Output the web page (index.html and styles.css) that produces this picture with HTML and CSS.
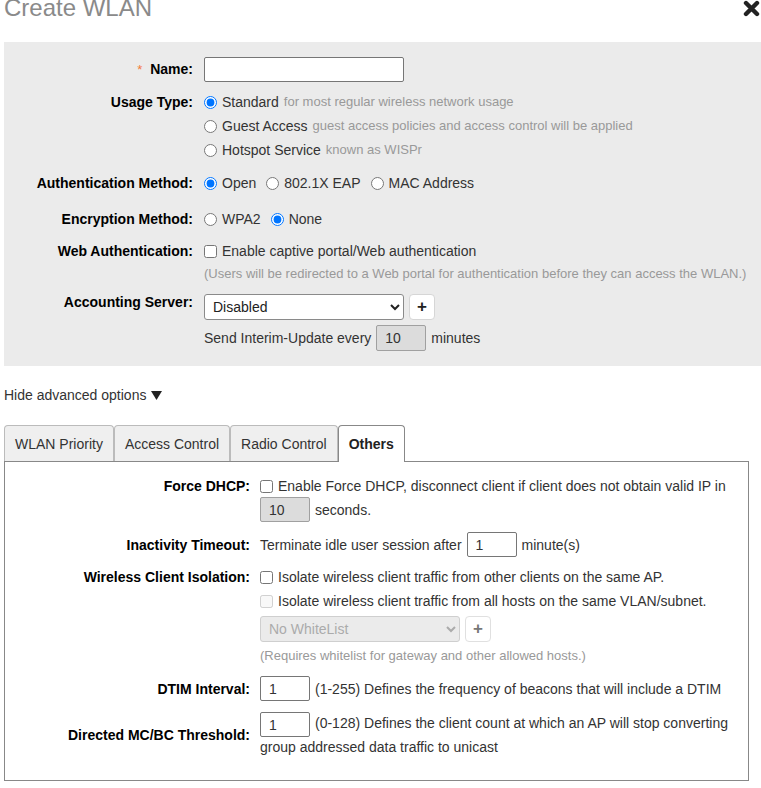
FILE: index.html
```html
<!DOCTYPE html>
<html>
<head>
<meta charset="utf-8">
<title>Create WLAN</title>
<link rel="stylesheet" href="styles.css">
</head>
<body>
<div class="page">
  <div class="head">
    <h1 class="title">Create WLAN</h1>
    <svg class="close" width="17" height="17" viewBox="0 0 17 17" aria-label="Close">
      <path d="M3 3 L14 14 M14 3 L3 14" stroke="#222" stroke-width="4.4" stroke-linecap="round" fill="none"/>
    </svg>
  </div>

  <div class="panel">
    <div class="row">
      <div class="lbl lbl-name"><span class="req">*</span>&nbsp; Name:</div>
      <div class="ctl"><input class="txt w200" type="text"></div>
    </div>

    <div class="row mt8">
      <div class="lbl">Usage Type:</div>
      <div class="ctl">
        <label class="line"><input type="radio" name="usage" checked> Standard <span class="hint">for most regular wireless network usage</span></label>
        <label class="line"><input type="radio" name="usage"> Guest Access <span class="hint">guest access policies and access control will be applied</span></label>
        <label class="line"><input type="radio" name="usage"> Hotspot Service <span class="hint">known as WISPr</span></label>
      </div>
    </div>

    <div class="row mt9">
      <div class="lbl">Authentication Method:</div>
      <div class="ctl line">
        <label class="opt"><input type="radio" name="auth" checked> Open</label>
        <label class="opt"><input type="radio" name="auth"> 802.1X EAP</label>
        <label class="opt"><input type="radio" name="auth"> MAC Address</label>
      </div>
    </div>

    <div class="row mt12">
      <div class="lbl">Encryption Method:</div>
      <div class="ctl line">
        <label class="opt"><input type="radio" name="enc"> WPA2</label>
        <label class="opt"><input type="radio" name="enc" checked> None</label>
      </div>
    </div>

    <div class="row mt8">
      <div class="lbl">Web Authentication:</div>
      <div class="ctl">
        <label class="line"><input type="checkbox"> Enable captive portal/Web authentication</label>
        <div class="note">(Users will be redirected to a Web portal for authentication before they can access the WLAN.)</div>
      </div>
    </div>

    <div class="row mt9">
      <div class="lbl lbl-acct">Accounting Server:</div>
      <div class="ctl">
        <div class="inl">
          <select class="sel"><option>Disabled</option></select>
          <button class="plus" type="button">+</button>
        </div>
        <div class="inl mt5">
          <span>Send Interim-Update every</span>
          <input class="txt w50 dim" type="text" value="10">
          <span>minutes</span>
        </div>
      </div>
    </div>
  </div>

  <div class="adv">Hide advanced options
    <svg class="tri" width="11" height="9" viewBox="0 0 11 9"><path d="M0 0 H11 L5.5 9 Z" fill="#222"/></svg>
  </div>

  <div class="tabs">
    <div class="tab">WLAN Priority</div>
    <div class="tab">Access Control</div>
    <div class="tab">Radio Control</div>
    <div class="tab active">Others</div>
  </div>

  <div class="box">
    <div class="row">
      <div class="lbl2 lh22">Force DHCP:</div>
      <div class="ctl2 wrap">
        <label class="first"><input type="checkbox">Enable Force DHCP, disconnect client if client does not obtain valid IP in</label>
        <input class="txt w50 dim h25" type="text" value="10">
        <span>seconds.</span>
      </div>
    </div>

    <div class="row mt10 center">
      <div class="lbl2">Inactivity Timeout:</div>
      <div class="ctl2 inl">
        <span>Terminate idle user session after</span>
        <input class="txt w50 h25" type="text" value="1">
        <span>minute(s)</span>
      </div>
    </div>

    <div class="row mt8">
      <div class="lbl2">Wireless Client Isolation:</div>
      <div class="ctl2">
        <label class="line"><input type="checkbox"> Isolate wireless client traffic from other clients on the same AP.</label>
        <label class="line"><input type="checkbox" disabled> Isolate wireless client traffic from all hosts on the same VLAN/subnet.</label>
        <div class="inl mt3">
          <select class="sel" disabled><option>No WhiteList</option></select>
          <button class="plus" type="button" disabled>+</button>
        </div>
        <div class="note mt3">(Requires whitelist for gateway and other allowed hosts.)</div>
      </div>
    </div>

    <div class="row mt9 center">
      <div class="lbl2">DTIM Interval:</div>
      <div class="ctl2 inl">
        <input class="txt w50 h25" type="text" value="1">
        <span>(1-255) Defines the frequency of beacons that will include a DTIM</span>
      </div>
    </div>

    <div class="row mt11 center">
      <div class="lbl2">Directed MC/BC Threshold:</div>
      <div class="ctl2 flow2"><input class="txt w50 h25 inline" type="text" value="1">(0-128) Defines the client count at which an AP will stop converting group addressed data traffic to unicast</div>
    </div>
  </div>
</div>
</body>
</html>
```

FILE: styles.css
```css
* { box-sizing: border-box; }

body {
  margin: 0;
  font-family: "Liberation Sans", Arial, sans-serif;
  font-size: 14px;
  color: #333;
  background: #fff;
}

.page { padding-left: 4px; }

.head {
  height: 42px;
  display: flex;
  justify-content: space-between;
  align-items: flex-start;
}

.title {
  margin: -7px 0 0 0;
  font-size: 24px;
  font-weight: normal;
  line-height: 30px;
  color: #8a8a8a;
}

.close { margin: 0 1px 0 0; display: block; }

.panel {
  background: #ebebeb;
  padding: 15px 0;
}

.row { display: flex; align-items: flex-start; }
.row.center { align-items: center; }

.lbl {
  flex: 0 0 200px;
  padding-right: 11px;
  text-align: right;
  font-weight: bold;
  color: #000;
  line-height: 24px;
}
.lbl-name { line-height: 25px; }
.lbl-acct { line-height: 17px; }
.req { color: #f47a3a; font-weight: normal; font-size: 13px; }

.ctl { flex: 1; min-width: 0; }

.line {
  display: flex;
  align-items: center;
  height: 24px;
  line-height: 24px;
  white-space: nowrap;
}
.opt { display: inline-flex; align-items: center; margin-right: 10px; }

input[type="radio"], input[type="checkbox"] {
  width: 13px;
  height: 13px;
  margin: 0 5px 0 0;
  flex: 0 0 13px;
}

.hint { color: #999; font-size: 13px; margin-left: 5px; }
.note { color: #999; font-size: 13px; line-height: 22px; }

.mt3 { margin-top: 3px; }
.mt5 { margin-top: 5px; }
.mt8 { margin-top: 8px; }
.mt9 { margin-top: 9px; }
.mt10 { margin-top: 10px; }
.mt11 { margin-top: 11px; }
.mt12 { margin-top: 12px; }

.txt {
  height: 25px;
  border: 1px solid #767676;
  border-radius: 2px;
  padding: 0 8px;
  font-family: inherit;
  font-size: 14px;
  color: #333;
  background: #fff;
}
.w200 { width: 200px; }
.w50 { width: 50px; height: 26px; }
.h25 { height: 25px; }
.dim { background: #dcdcdc; border-color: #a0a0a0; }

.inl { display: flex; align-items: center; gap: 5px; white-space: nowrap; }

.sel {
  width: 200px;
  height: 26px;
  border: 1px solid #8a8a8a;
  border-radius: 3px;
  padding: 0 4px;
  font-family: inherit;
  font-size: 14px;
  color: #222;
  background: #fff;
}
.sel:disabled { background: #e3e3e3; border-color: #bbb; color: #888; }

.plus {
  width: 26px;
  height: 26px;
  padding: 0;
  border: 1px solid #d6d6d6;
  border-radius: 4px;
  background: #fff;
  font-family: inherit;
  font-size: 17px;
  font-weight: bold;
  line-height: 22px;
  color: #222;
}
.plus:disabled { color: #777; border-color: #e0e0e0; }

.adv {
  margin-top: 19px;
  line-height: 20px;
  color: #333;
  display: flex;
  align-items: center;
  gap: 5px;
}
.tri { display: block; }

.tabs {
  margin-top: 20px;
  display: flex;
  align-items: flex-end;
}
.tab {
  height: 36px;
  padding: 0 10px;
  line-height: 37px;
  border: 1px solid #bbb;
  border-bottom: none;
  border-radius: 4px 4px 0 0;
  background: #efefef;
  color: #333;
}
.tab.active {
  background: #fff;
  border-color: #888;
  font-weight: bold;
  color: #222;
  height: 37px;
  margin-bottom: -1px;
  position: relative;
}

.box {
  width: 745px;
  border: 1px solid #888;
  padding: 13px 7px 23px 0;
}

.lbl2 {
  flex: 0 0 255px;
  padding-right: 10px;
  text-align: right;
  font-weight: bold;
  color: #000;
  line-height: 24px;
}
.lh22 { line-height: 22px; }
.ctl2 { flex: 1; min-width: 0; }

.wrap {
  display: flex;
  flex-wrap: wrap;
  align-items: center;
  column-gap: 5px;
}
.first {
  display: flex;
  align-items: center;
  line-height: 22px;
  white-space: nowrap;
}

.flow2 { line-height: 20px; }
.flow2 .inline { vertical-align: middle; margin: 0 5px 0 0; }
```
